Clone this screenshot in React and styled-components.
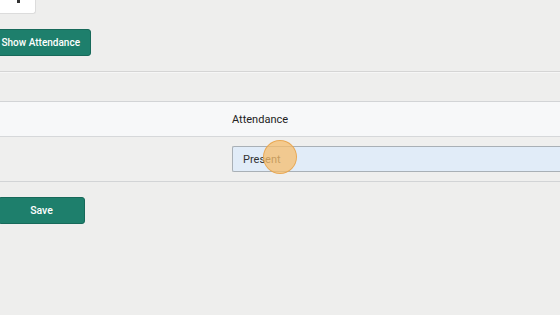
import React from 'react';
import styled, { createGlobalStyle } from 'styled-components';

const GlobalStyle = createGlobalStyle`
  html, body {
    margin: 0;
    padding: 0;
    background: #eeeeed;
    font-family: Roboto, "Liberation Sans", sans-serif;
    overflow: hidden;
  }
`;

const Page = styled.div`
  width: 580px;
  margin-left: -8px;
  height: 315px;
`;

const TopBox = styled.div`
  width: 42px;
  height: 13px;
  background: #ffffff;
  border: 1px solid #dcdcdc;
  border-top: none;
  border-radius: 0 0 3px 3px;
  display: flex;
  justify-content: center;

  &::after {
    content: '';
    width: 3px;
    height: 3px;
    background: #333;
    margin-left: 8px;
  }
`;

const Toolbar = styled.div`
  padding: 15px 0;
  border-bottom: 1px solid #d5d5d5;
  box-shadow: 0 1px 0 #f6f6f6;
`;

const Button = styled.button`
  height: 27px;
  width: ${p => p.$width}px;
  margin-left: ${p => p.$offset || 0}px;
  background: #1e7f6c;
  border: 1px solid #17695a;
  border-radius: 3px;
  color: #ffffff;
  font-family: Roboto, "Liberation Sans", sans-serif;
  font-size: ${p => p.$size || 10.5}px;
  font-weight: 500;
  padding: 0 ${p => p.$padRight || 0}px 0 0;
  display: flex;
  align-items: center;
  justify-content: ${p => (p.$padRight ? 'flex-end' : 'center')};
  white-space: nowrap;
`;

const Table = styled.div`
  margin-top: 29px;
  border-top: 1px solid #d2d4d6;
  border-bottom: 1px solid #d2d4d6;
`;

const Row = styled.div`
  display: grid;
  grid-template-columns: 240px 1fr;
  align-items: center;
  height: ${p => p.$height}px;
  background: ${p => p.$bg};
  border-top: ${p => (p.$divided ? '1px solid #d6d8da' : 'none')};
  box-sizing: border-box;
`;

const Cell = styled.div`
  font-size: 11px;
  color: #222;
`;

const Select = styled.div`
  height: 26px;
  box-sizing: border-box;
  background: #e1ecf8;
  border: 1px solid #a9b0b6;
  border-right: none;
  border-radius: 2px 0 0 2px;
  display: flex;
  align-items: center;
  padding-left: 10px;
  font-size: 11px;
  color: #333;
  position: relative;
`;

const Click = styled.span`
  position: absolute;
  left: 30px;
  top: -7px;
  width: 34px;
  height: 34px;
  border-radius: 50%;
  background: rgba(246, 190, 110, 0.75);
  border: 1px solid rgba(230, 160, 70, 0.8);
  box-sizing: border-box;
`;

const Footer = styled.div`
  padding-top: 15px;
`;

export default function App() {
  return (
    <>
      <GlobalStyle />
      <Page>
        <TopBox />
        <Toolbar>
          <Button $width={99} $size={10} $padRight={10}>Show Attendance</Button>
        </Toolbar>
        <Table>
          <Row $height={34} $bg="#f7f8f9">
            <Cell />
            <Cell>Attendance</Cell>
          </Row>
          <Row $height={45} $bg="#efefee" $divided>
            <Cell />
            <Cell>
              <Select>
                Present
                <Click />
              </Select>
            </Cell>
          </Row>
        </Table>
        <Footer>
          <Button $width={87} $offset={6}>Save</Button>
        </Footer>
      </Page>
    </>
  );
}
